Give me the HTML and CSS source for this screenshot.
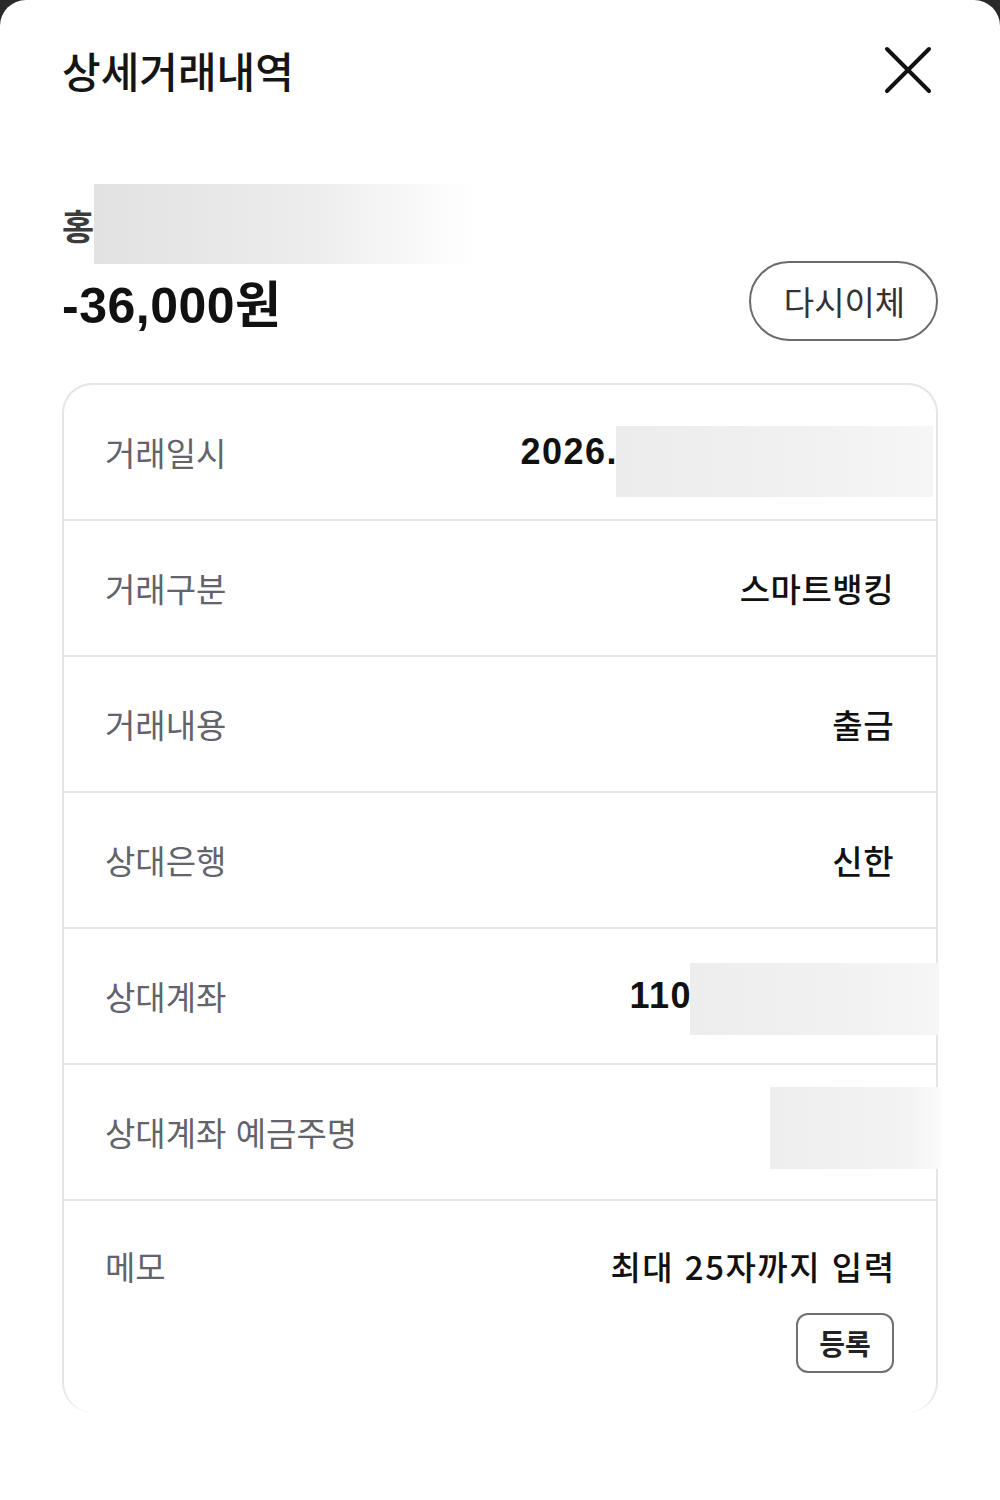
FILE: index.html
```html
<!DOCTYPE html>
<html lang="ko">
<head>
    <meta charset="UTF-8">
    <meta name="viewport" content="width=device-width, initial-scale=1.0">
    <title>상세거래내역</title>
    <link rel="stylesheet" href="styles.css">
</head>
<body>

<div class="sheet">
    <div class="header">
        <h1 class="title">상세거래내역</h1>
        <button class="close" aria-label="닫기">
            <svg width="52" height="52" viewBox="0 0 52 52">
                <path d="M5 5 L47 47 M47 5 L5 47" stroke="#111" stroke-width="4" stroke-linecap="round" fill="none"/>
            </svg>
        </button>
    </div>

    <div class="name-row">
        <span class="name">홍</span>
        <span class="mask mask-name"></span>
    </div>

    <div class="amount-row">
        <span class="amount">-36,000원</span>
        <button class="btn-again">다시이체</button>
    </div>

    <div class="card">
        <div class="row">
            <span class="label">거래일시</span>
            <span class="value"><span class="num">2026.</span><span class="mask mask-date"></span></span>
        </div>
        <div class="row">
            <span class="label">거래구분</span>
            <span class="value">스마트뱅킹</span>
        </div>
        <div class="row">
            <span class="label">거래내용</span>
            <span class="value">출금</span>
        </div>
        <div class="row">
            <span class="label">상대은행</span>
            <span class="value">신한</span>
        </div>
        <div class="row">
            <span class="label">상대계좌</span>
            <span class="value"><span class="num">110</span><span class="mask mask-account"></span></span>
        </div>
        <div class="row">
            <span class="label">상대계좌 예금주명</span>
            <span class="value"><span class="mask mask-holder"></span></span>
        </div>
        <div class="row memo">
            <div class="memo-line">
                <span class="label">메모</span>
                <span class="value">최대 25자까지 입력</span>
            </div>
            <button class="btn-save">등록</button>
        </div>
    </div>
</div>

</body>
</html>
```

FILE: styles.css
```css
body {
    margin: 0;
    background-color: #2a2a2a;
    font-family: "Noto Sans CJK KR", "Noto Sans", sans-serif;
    color: #111111;
}
.sheet {
    background-color: #ffffff;
    border-radius: 26px 26px 0 0;
    min-height: 1500px;
    padding: 42px 62px 0 62px;
    box-sizing: border-box;
}
.header {
    display: flex;
    justify-content: space-between;
    align-items: center;
    height: 56px;
}
.title {
    margin: 0;
    font-size: 42px;
    font-weight: 500;
    letter-spacing: 0;
    line-height: 56px;
    color: #151515;
}
.close {
    border: none;
    background: none;
    padding: 0;
    margin-right: 4px;
    display: flex;
}
.name-row {
    display: flex;
    align-items: center;
    height: 80px;
    margin-top: 86px;
}
.name {
    font-size: 35px;
    font-weight: 700;
    color: #3c3c3c;
}
.mask {
    display: inline-block;
}
.mask-name {
    width: 380px;
    height: 80px;
    background: linear-gradient(90deg, #e2e2e2 0%, #ececec 55%, #ffffff 100%);
}
.amount-row {
    display: flex;
    justify-content: space-between;
    align-items: center;
    margin-top: -3px;
}
.amount {
    font-family: "Liberation Sans", "Noto Sans CJK KR", sans-serif;
    font-size: 50px;
    font-weight: 700;
    letter-spacing: 0.5px;
    color: #111111;
}
.btn-again {
    width: 189px;
    height: 80px;
    border: 2px solid #6b6b6b;
    border-radius: 40px;
    background: #ffffff;
    font-family: inherit;
    font-size: 33px;
    letter-spacing: 0;
    color: #333333;
    padding: 0 0 0 2px;
}
.card {
    margin-top: 42px;
    border: 2px solid #e4e4e9;
    border-bottom: none;
    border-radius: 30px;
}
.row {
    display: flex;
    justify-content: space-between;
    align-items: center;
    height: 134px;
    padding: 0 42px 0 41px;
    border-bottom: 2px solid #e4e4e9;
}
.label {
    font-size: 33px;
    color: #62636b;
    letter-spacing: 0;
}
.value {
    display: flex;
    align-items: center;
    font-size: 33px;
    font-weight: 500;
    color: #111111;
    letter-spacing: 0.5px;
}
.num {
    font-family: "Liberation Sans", "Noto Sans CJK KR", sans-serif;
    font-size: 36px;
    font-weight: 700;
    letter-spacing: 1.5px;
}
.mask-date {
    width: 317px;
    height: 71px;
    margin-right: -39px;
    margin-top: 18px;
    margin-left: -2px;
    background: linear-gradient(90deg, #ececec 0%, #f1f1f1 60%, #f6f6f6 100%);
}
.mask-account {
    width: 249px;
    height: 72px;
    margin-right: -45px;
    margin-top: 6px;
    margin-left: -2px;
    background: linear-gradient(90deg, #ededed 0%, #f2f2f2 70%, #f6f6f6 100%);
}
.mask-holder {
    width: 171px;
    height: 82px;
    margin-right: -47px;
    margin-top: -8px;
    background: linear-gradient(90deg, #eeeeee 0%, #f3f3f3 80%, #fafafa 100%);
}
.memo {
    display: block;
    height: auto;
    padding: 32px 42px 39px 41px;
    border-bottom: none;
}
.memo-line {
    display: flex;
    justify-content: space-between;
    align-items: center;
    height: 66px;
}
.memo .value {
    letter-spacing: 1.5px;
    margin-right: -1.5px;
}
.btn-save {
    display: block;
    margin: 14px 0 0 auto;
    width: 98px;
    height: 60px;
    border: 2px solid #707070;
    border-radius: 12px;
    background: #ffffff;
    font-family: inherit;
    font-size: 28px;
    font-weight: 700;
    color: #222222;
    padding: 0;
}
```
